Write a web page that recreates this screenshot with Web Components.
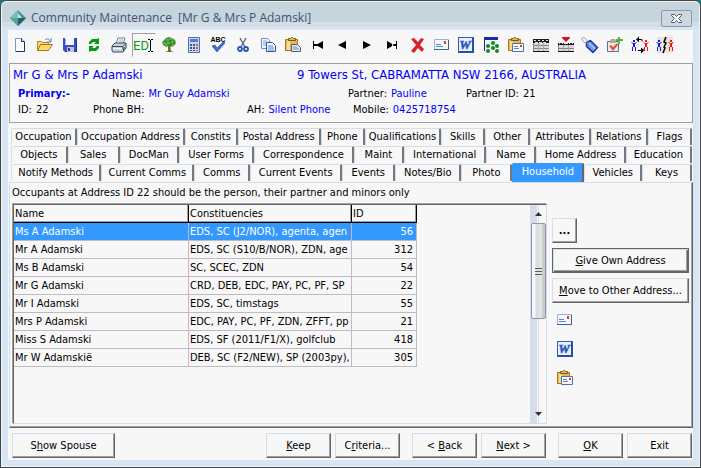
<!DOCTYPE html>
<html lang="en">
<head>
<meta charset="utf-8">
<title>Community Maintenance</title>
<style>
    html, body {
        margin: 0;
        height: 100%;
        background: #107e80;
    }
    body {
        --face: #f7f7f7;
        --frame: #d6e6f5;
        --light: #d4dde8;
        --mid: #a0a0a0;
        --dark: #64646a;
        --select: #3399ff;
        --link: #0000f4;
        font: 11px/14px "DejaVu Sans Condensed", "Noto Sans", sans-serif;
        color: #000;
    }
</style>
</head>
<body>
<maintenance-app></maintenance-app>

<script>
const envelope = `
    <path d="M.5 2.500h14v10H.5z" fill="#f4f8ff" stroke="#9db1d6"/>
    <path d="M0 12.500h14.500V3" fill="none" stroke="#40618f"/>
    <path d="M2 7.500h5M2 9.500h7" stroke="#5c86c4"/>
    <path d="M10 4h2v3h-2z" fill="#d8401c"/>`;

const word = `
    <rect x="0.500" y="0.500" width="15" height="15" fill="#e9f1ff" stroke="#2f5bb8"/>
    <path d="M1 15h14V1" fill="none" stroke="#2450a8" stroke-width="2"/>
    <text x="7" y="12" text-anchor="middle" font-family="Liberation Serif, serif" font-size="13" font-weight="bold" font-style="italic" fill="#2b58b5" stroke="#2b58b5" stroke-width=".5">W</text>`;

const clipboard = `
    <path d="M.5 2.500h12v11H.5z" fill="#e9b950" stroke="#a8761c"/>
    <path d="M2 4h3v9H2z" fill="#f8dc8e"/>
    <path d="M3.500 3.500v-2h2l1-1h1l1 1h2v2z" fill="#d8c070" stroke="#705820"/>`;

const man = (x, c) => `
    <path d="M${x + 1} 3h2v2h-2zM${x + 1} 6h2v4h-2zM${x} 10h1v4h-1zM${x + 3} 10h1v4h-1z" fill="${c}"/>
    <path d="M${x - 0.5} 5l2 2h1l2-2" fill="none" stroke="${c}"/>`;

const icons = {
    blank: `
        <path d="M3.500 1.500h6l3 3v10h-9z" fill="#fafcff" stroke="#7d98bd"/>
        <path d="M12.500 5v9.500H4" fill="none" stroke="#17365e"/>
        <path d="M9.500 1.500v3h3" fill="#c5daf3" stroke="#17365e"/>`,
    open: `
        <path d="M.5 13.500v-9h4l1 1h6v3" fill="#f7d77c" stroke="#b98820"/>
        <path d="M.5 13.500l3-6h12l-4 6z" fill="#ffd869" stroke="#a87919"/>
        <path d="M8 3c2-2 4-1 5 1M14 1v4h-4" fill="none" stroke="#5b7fa8"/>`,
    save: `
        <path d="M1 1h14v14H3l-2-2z" fill="#3c50c0"/>
        <path d="M14.500 2v12.500H3" fill="none" stroke="#26348e"/>
        <path d="M3 1h9v7H3z" fill="#f3f5ff"/>
        <path d="M3 2h1v5H3z" fill="#a3acd8"/>
        <path d="M5 10h7v5H5z" fill="#b9c5e8"/>
        <path d="M6 11h2v3H6z" fill="#28388c"/>`,
    refresh: `
        <path d="M3 7V5l3-3h5l2-1v6H8l2-2H7L5 7z" fill="#0a9a12"/>
        <path d="M13 9v2l-3 3H5l-2 1V9h5l-2 2h3l2-2z" fill="#0a9a12"/>`,
    print: `
        <path d="M5 7l2-6h7l-2 6z" fill="#fff" stroke="#6c7f96"/>
        <path d="M8 3h4M7.500 5h4" stroke="#9aaac0"/>
        <path d="M1 9l3-3h11v5l-3 4H2l-1-1z" fill="#c8d0de" stroke="#3e4c60"/>
        <path d="M1 9.500h11l3-3M12.500 10v4" fill="none" stroke="#3e4c60"/>
        <path d="M2 11h9v1H2z" fill="#fff"/>
        <path d="M11 10h3v2h-3z" fill="#22b52c"/>`,
    edit: `
        <text x="-3" y="13" font-family="Roboto, sans-serif" font-size="13" fill="#0a980f">ED</text>
        <path d="M12 2.500h2M15 2.500h2M14.500 3v11M12 14.500h2M15 14.500h2" stroke="#000"/>`,
    tree: `
        <path d="M7 8h2l1 6 3 1H4l3-1z" fill="#7a6a2c"/>
        <path d="M5 1l3-1 3 1 3 2 1 3-2 3-4 1-1-1-3 1-3-2-1-3 2-2z" fill="#3f9632"/>
        <path d="M2 6h3M5 3h3M9 2h2M10 5h3M6 6h3M4 8h2M11 8h2" stroke="#8bd05f"/>
        <path d="M4 5h1M8 4h2M8 8h2M12 6h1" stroke="#186a20"/>`,
    calc: `
        <path d="M2.500.5h11v15h-11z" fill="#c8d8f4" stroke="#526fae"/>
        <path d="M4 2h8v3H4z" fill="#5c7dca"/>
        <path d="M4 7h2v2H4zM7 7h2v2H7zM4 10h2v2H4zM7 10h2v2H7zM4 13h2v1H4zM7 13h2v1H7z" fill="#3f58a2"/>
        <path d="M10 7h2v2h-2zM10 10h2v2h-2zM10 13h2v1h-2z" fill="#d45555"/>`,
    spell: `
        <text x="8" y="5" text-anchor="middle" font-family="Liberation Sans, sans-serif" font-size="7" font-weight="bold" fill="#000">ABC</text>
        <path d="M2 9l3-1 2 3 6-6 2 1-8 9z" fill="#3d6ed0" stroke="#244a9b" stroke-width=".6"/>`,
    cut: `
        <path d="M5 1l5 9M11 1L6 10" stroke="#5e6d85" stroke-width="1.500"/>
        <circle cx="5" cy="12" r="2" fill="none" stroke="#2355b8" stroke-width="1.800"/>
        <circle cx="11" cy="12" r="2" fill="none" stroke="#2355b8" stroke-width="1.800"/>`,
    copy: `
        <path d="M1.500 1.500h6l2 2v8h-8z" fill="#f2f7ff" stroke="#6b8dbf"/>
        <path d="M3 4h4M3 6h4M3 8h3" stroke="#7ba2dc"/>
        <path d="M6.500 5.500h6l3 3v6h-9z" fill="#f2f7ff" stroke="#31569b"/>
        <path d="M8 9h5M8 11h6M8 13h6" stroke="#5a86ce"/>`,
    paste: `${clipboard}
        <path d="M6.500 7.500h6l3 3v4h-9z" fill="#e3e9f4" stroke="#4a5f82"/>
        <path d="M8 10h4M8 12h6" stroke="#7686a4"/>`,
    first: `<path d="M3 4h1v8H3zM13 4v8L6 8zM4 7h4v2H4z" fill="#000"/>`,
    prev: `<path d="M12 4v8L4 8z" fill="#000"/>`,
    next: `<path d="M4 4v8l8-4z" fill="#000"/>`,
    last: `<path d="M3 4v8l7-4zM12 4h1v8h-1zM8 7h4v2H8z" fill="#000"/>`,
    remove: `<path d="M2 2l3-1 4 4 3-4 3 1-4 6 4 4-2 3-4-4-4 5-3-2 5-6z" fill="#d9222c"/>`,
    mail: envelope,
    word,
    export: `
        <path d="M1.500 14V1.500H14" fill="none" stroke="#17208c"/>
        <path d="M1 0h14v3H1z" fill="#1b2ba8"/>
        <path d="M2 3h13v10H2z" fill="#f5f5f5"/>
        <g fill="#128a20">
            <circle cx="10" cy="6" r="2"/><circle cx="5" cy="9" r="2"/><circle cx="14" cy="9" r="2"/>
            <circle cx="10" cy="11" r="2"/><circle cx="14" cy="14" r="2"/><circle cx="5" cy="14" r="2"/>
        </g>`,
    pasteMail: `${clipboard}
        <path d="M4.500 6.500h11v8h-11z" fill="#f5f9ff" stroke="#53719f"/>
        <path d="M6 9.500h4M6 11.500h5" stroke="#5c86c4"/>
        <path d="M12 8h2v2h-2z" fill="#d8401c"/>`,
    table: `
        <path d="M0 6h16v9H0z" fill="#dcd6dd"/>
        <path d="M0 2h16v4H0z" fill="#1c1c1c"/>
        <path d="M1 3h2v1H1zM5 3h2v1H5zM9 3h2v1H9zM13 3h2v1h-2zM2 5h3v1H2zM6 5h3v1H6zM10 5h3v1h-3z" fill="#e4e4e4"/>
        <path d="M0 8.500h16M0 11.500h16M.5 6v9" stroke="#8a848c"/>
        <path d="M5.500 6v8M10.500 6v8" stroke="#aaa4ac"/>
        <path d="M0 14.500h16" stroke="#111"/>`,
    tableDown: `
        <path d="M4 0h8v1L8 5 4 1z" fill="#d4121e"/>
        <path d="M0 8h16v7H0z" fill="#dcd6dd"/>
        <path d="M0 6h6v2H0zM10 6h6v2h-6zM6 7h4v1H6z" fill="#1c1c1c"/>
        <path d="M1 6h1v1H1zM4 6h1v1H4zM11 6h1v1h-1zM14 6h1v1h-1z" fill="#e4e4e4"/>
        <path d="M0 11.500h16M.5 8v7" stroke="#8a848c"/>
        <path d="M5.500 8v6M10.500 8v6" stroke="#aaa4ac"/>
        <path d="M0 14.500h16" stroke="#111"/>`,
    tag: `
        <path d="M4.500 5.500l4-2 7 7-4.500 5-6.500-6z" fill="#6f92ea" stroke="#1a2ea0" stroke-width="1.400"/>
        <path d="M7 6l6 6" stroke="#a9c2fa" stroke-width="1.500"/>
        <path d="M6 6C2 7-1 2 0 1s4 0 6 4" fill="none" stroke="#8b97a5"/>`,
    task: `
        <path d="M.5 4.500h11v10H.5z" fill="#e7edf8" stroke="#5671a3"/>
        <path d="M3 4l1-2h4l1 2v2H3z" fill="#b8a88a"/>
        <path d="M2 9l2-1 2 2 4-4 1 2-5 6z" fill="#e85a20"/>
        <path d="M11 0h2v2h3v2h-3v3h-2V4H9V2h2z" fill="#4cb848"/>`,
    swap: `${man(0, '#1616e8')}${man(12, '#f01414')}
        <path d="M5 2.500h5v2M6 13.500h5v-2" fill="none" stroke="#000"/>
        <path d="M4 2.500l3-3v6zM12 13.500l-3-3v6z" fill="#000"/>`,
    split: `<path d="M0 0h16v16H0z" fill="#e6e6d8"/>${man(0, '#1616e8')}${man(12, '#f01414')}
        <path d="M9 0L7 5l2 1-2 4 1 1-2 5" fill="none" stroke="#000" stroke-width="1.500"/>`
};

const iconSvg = (name) => `<svg width="16" height="16" viewBox="0 0 16 16" aria-hidden="true">${icons[name]}</svg>`;

class AppWindow extends HTMLElement {
    constructor() {
        super();
        this.attachShadow({ mode: 'open' });
    }

    connectedCallback() {
        this.shadowRoot.innerHTML = `
            <style>
                :host {
                    display: flex;
                    flex-direction: column;
                    box-sizing: border-box;
                    height: 100vh;
                    padding: 0 7px 7px;
                    border: 1px solid #454545;
                    border-radius: 6px 6px 0 0;
                    box-shadow: inset 0 0 0 1px #eef5fa;
                    background: linear-gradient(#c6d5dd 0 21px, #d4dee7 21px 26px, var(--frame) 26px);
                }
                header {
                    display: flex;
                    align-items: center;
                    gap: 5px;
                    height: 29px;
                    padding: 5px 1px 0 2px;
                    box-sizing: border-box;
                    flex: none;
                    color: #45526c;
                }
                h1 {
                    flex: 1;
                    margin: 0;
                    font: 12px/18px "Open Sans", "Noto Sans", sans-serif;
                    white-space: pre;
                }
                button {
                    display: grid;
                    place-items: center;
                    width: 31px;
                    height: 17px;
                    padding: 0;
                    border: 1px solid #8c96b4;
                    border-radius: 2px;
                    background: #ccd8e0;
                }
                main {
                    display: flex;
                    flex-direction: column;
                    flex: 1;
                    min-height: 0;
                    background: var(--face);
                }
            </style>
            <header>
                <svg width="16" height="16" viewBox="0 0 16 16" aria-hidden="true">
                    <path d="M8 0l8 8-8 8-8-8z" fill="#4c9292"/>
                    <path d="M8 0v8H0z" fill="#79bdb8"/>
                    <path d="M8 8h8l-8 8z" fill="#236466"/>
                    <path d="M8 3l4 5H8z" fill="#c2e4de"/>
                    <path d="M8 8v8L0 8z" fill="#57a09c"/>
                </svg>
                <h1>${this.getAttribute('caption')}</h1>
                <button aria-label="Close">
                    <svg width="13" height="11" viewBox="0 0 13 11">
                        <path d="M1.500 1.500h3l2 2 2-2h3v1l-3 3 3 3v1h-3l-2-2-2 2h-3v-1l3-3-3-3z" fill="#fff" stroke="#535666"/>
                    </svg>
                </button>
            </header>
            <main><slot></slot></main>
        `;
    }
}

class ToolButton extends HTMLElement {
    constructor() {
        super();
        this.attachShadow({ mode: 'open' });
    }

    connectedCallback() {
        this.shadowRoot.innerHTML = `
            <style>
                :host { display: block; }
                button {
                    display: grid;
                    place-items: center;
                    width: 24px;
                    height: 24px;
                    padding: 0;
                    border: 1px solid transparent;
                    background: none;
                }
                svg { overflow: visible; }
                :host([pressed]) button {
                    border-color: var(--mid) transparent transparent var(--mid);
                }
            </style>
            <button aria-label="${this.getAttribute('icon')}">${iconSvg(this.getAttribute('icon'))}</button>
        `;
    }
}

class ToolBar extends HTMLElement {
    constructor() {
        super();
        this.attachShadow({ mode: 'open' });
    }

    connectedCallback() {
        this.shadowRoot.innerHTML = `
            <style>
                :host {
                    display: flex;
                    justify-content: space-between;
                    padding: 3px 16px 6px 0;
                }
            </style>
            ${this.getAttribute('icons').split(' ').map(name =>
                `<tool-button icon="${name}" ${name === 'edit' ? 'pressed' : ''}></tool-button>`).join('')}
        `;
    }
}

class InfoField extends HTMLElement {
    constructor() {
        super();
        this.attachShadow({ mode: 'open' });
    }

    connectedCallback() {
        this.shadowRoot.innerHTML = `
            <style>
                :host { display: flex; gap: 4px; white-space: nowrap; }
                .value { color: var(--link); }
                :host([plain]) .value { color: #000; }
            </style>
            <span>${this.getAttribute('label')}:</span>
            <span class="value"><slot></slot></span>
        `;
    }
}

class PersonSummary extends HTMLElement {
    constructor() {
        super();
        this.attachShadow({ mode: 'open' });
    }

    connectedCallback() {
        this.shadowRoot.innerHTML = `
            <style>
                :host {
                    display: block;
                    margin-left: 1px;
                    padding: 2px 3px 4px;
                    border: 1px solid var(--mid);
                    white-space: nowrap;
                }
                .title {
                    display: grid;
                    grid-template-columns: 284px 1fr;
                    font-size: 13px;
                    line-height: 18px;
                    color: var(--link);
                }
                .line {
                    display: grid;
                    grid-template-columns: 75px 154px 106px 113px 1fr;
                    padding-left: 5px;
                    line-height: 16px;
                }
                .title + .line { padding-top: 2px; }
                .name { padding-left: 19px; }
                .partner { grid-column: 4; margin-left: -5px; }
                b { color: var(--link); }
            </style>
            <div class="title"><span>Mr G &amp; Mrs P Adamski</span><span>9 Towers St, CABRAMATTA NSW 2166, AUSTRALIA</span></div>
            <div class="line">
                <b>Primary:-</b>
                <info-field class="name" label="Name">Mr Guy Adamski</info-field>
                <info-field class="partner" label="Partner">Pauline</info-field>
                <info-field plain label="Partner ID">21</info-field>
            </div>
            <div class="line">
                <info-field plain label="ID">22</info-field>
                <info-field label="Phone BH"></info-field>
                <info-field label="AH">Silent Phone</info-field>
                <info-field label="Mobile">0425718754</info-field>
            </div>
        `;
    }
}

// each tab is "label:weight", the weight being its share of the row
class TabRow extends HTMLElement {
    constructor() {
        super();
        this.attachShadow({ mode: 'open' });
    }

    connectedCallback() {
        const active = this.getAttribute('active');
        this.shadowRoot.innerHTML = `
            <style>
                :host { display: flex; height: 18px; }
                button {
                    flex: 1 1 0;
                    min-width: 0;
                    height: 17px;
                    padding: 0;
                    border: solid;
                    border-width: 1px 2px 0 1px;
                    border-color: var(--light) #77777c transparent var(--light);
                    border-radius: 2px 1px 0 0;
                    background: none;
                    font: inherit;
                    color: inherit;
                    white-space: nowrap;
                }
                button[aria-selected=true] {
                    height: 20px;
                    margin-top: -1px;
                    padding-bottom: 3px;
                    border-color: var(--select) var(--dark) var(--select) var(--select);
                    background: var(--select);
                    color: #fff;
                }
            </style>
            ${this.getAttribute('tabs').split('|').map(tab => {
                const [label, weight] = tab.split(':');
                return `<button role="tab" aria-selected="${label === active}" style="flex-grow: ${weight}">${label}</button>`;
            }).join('')}
        `;
    }
}

class PushButton extends HTMLElement {
    constructor() {
        super();
        this.attachShadow({ mode: 'open' });
    }

    connectedCallback() {
        this.shadowRoot.innerHTML = `
            <style>
                :host { display: block; }
                button {
                    width: 100%;
                    height: 25px;
                    padding: 0;
                    border: 1px solid;
                    border-color: var(--light) var(--dark) var(--dark) var(--light);
                    box-shadow: inset -1px -1px var(--mid);
                    background: var(--face);
                    font: inherit;
                    color: inherit;
                    white-space: nowrap;
                }
                :host([default]) button {
                    border-color: var(--dark);
                    box-shadow: inset 1px 1px var(--light), inset -1px -1px var(--dark), inset -2px -2px var(--mid);
                }
            </style>
            <button><slot></slot></button>
        `;
    }
}

class ScrollBar extends HTMLElement {
    constructor() {
        super();
        this.attachShadow({ mode: 'open' });
    }

    connectedCallback() {
        this.shadowRoot.innerHTML = `
            <style>
                :host {
                    display: flex;
                    flex-direction: column;
                    align-items: center;
                    width: 16px;
                    background: linear-gradient(90deg, var(--light) 7px, #f7f7f7 7px 8px, var(--light) 8px 9px, #f7f7f7 9px);
                }
                .arrow { display: grid; place-items: center; height: 18px; }
                .thumb {
                    display: grid;
                    place-items: center;
                    box-sizing: border-box;
                    width: 15px;
                    height: 96px;
                    margin-bottom: auto;
                    border: 1px solid #8d97ac;
                    border-radius: 2px;
                    background: linear-gradient(90deg, #f5f7fa 3px, #d5dfe9 4px 7px, #e4e6da 7px 10px, #ccc9d3 10px);
                }
            </style>
            <div class="arrow"><svg width="7" height="4"><path d="M0 4l3.500-4L7 4z" fill="#333"/></svg></div>
            <div class="thumb"><svg width="7" height="9"><path d="M0 1.500h7M0 4.500h7M0 7.500h7" stroke="#555a66"/></svg></div>
            <div class="arrow"><svg width="7" height="4"><path d="M0 0l3.500 4L7 0z" fill="#333"/></svg></div>
        `;
    }
}

const occupants = [
    ['Ms A Adamski', 'EDS, SC (J2/NOR), agenta, agen', 56],
    ['Mr A Adamski', 'EDS, SC (S10/B/NOR), ZDN, age', 312],
    ['Ms B Adamski', 'SC, SCEC, ZDN', 54],
    ['Mr G Adamski', 'CRD, DEB, EDC, PAY, PC, PF, SP', 22],
    ['Mr I Adamski', 'EDS, SC, timstags', 55],
    ['Mrs P Adamski', 'EDC, PAY, PC, PF, ZDN, ZFFT, pp', 21],
    ['Miss S Adamski', 'EDS, SF (2011/F1/X), golfclub', 418],
    ['Mr W Adamskië', 'DEB, SC (F2/NEW), SP (2003py),', 305]
];

class OccupantGrid extends HTMLElement {
    constructor() {
        super();
        this.attachShadow({ mode: 'open' });
    }

    connectedCallback() {
        this.shadowRoot.innerHTML = `
            <style>
                :host {
                    display: flex;
                    justify-content: space-between;
                    border: 1px solid;
                    border-color: var(--dark) var(--light) var(--light) var(--dark);
                    box-shadow: -1px -1px var(--mid);
                }
                table {
                    align-self: flex-start;
                    width: 403px;
                    table-layout: fixed;
                    border-collapse: separate;
                    border-spacing: 0;
                }
                .name { width: 175px; }
                .id { width: 65px; }
                th, td {
                    box-sizing: border-box;
                    height: 18px;
                    padding: 0 1px;
                    overflow: hidden;
                    border: solid #c3b9c6;
                    border-width: 0 1px 1px 0;
                    font-weight: normal;
                    line-height: 17px;
                    text-align: left;
                    white-space: nowrap;
                }
                th {
                    border-color: #000;
                    box-shadow: inset -1px -1px var(--mid);
                }
                td:last-child { padding-right: 3px; text-align: right; }
                tr.selected td { background: var(--select); color: #fff; }
            </style>
            <table>
                <thead><tr><th class="name">Name</th><th>Constituencies</th><th class="id">ID</th></tr></thead>
                <tbody>
                    ${occupants.map((row, i) => `<tr class="${i === 0 ? 'selected' : ''}">${row.map(cell => `<td>${cell}</td>`).join('')}</tr>`).join('')}
                </tbody>
            </table>
            <scroll-bar></scroll-bar>
        `;
    }
}

class HouseholdPage extends HTMLElement {
    constructor() {
        super();
        this.attachShadow({ mode: 'open' });
    }

    connectedCallback() {
        this.shadowRoot.innerHTML = `
            <style>
                :host {
                    display: flex;
                    flex-direction: column;
                    min-height: 0;
                    margin-left: 1px;
                    border: 1px solid;
                    border-color: var(--light) var(--dark) var(--dark) var(--light);
                    box-shadow: inset -1px -1px var(--mid);
                }
                p { margin: 0; padding: 3px 2px; white-space: nowrap; }
                .body { display: flex; flex: 1; gap: 5px; min-height: 0; padding: 1px 3px 3px; }
                occupant-grid { flex: 1; }
                aside { display: flex; flex-direction: column; width: 137px; gap: 5px; padding-top: 14px; }
                .more { width: 25px; font-weight: bold; }
                .icons { padding: 0 1px; display: grid; gap: 5px; }
            </style>
            <p>Occupants at Address ID 22 should be the person, their partner and minors only</p>
            <div class="body">
                <occupant-grid></occupant-grid>
                <aside>
                    <push-button class="more">...</push-button>
                    <push-button default><u>G</u>ive Own Address</push-button>
                    <push-button><u>M</u>ove to Other Address...</push-button>
                    <div class="icons">
                        <tool-button icon="mail"></tool-button>
                        <tool-button icon="word"></tool-button>
                        <tool-button icon="pasteMail"></tool-button>
                    </div>
                </aside>
            </div>
        `;
    }
}

class MaintenanceApp extends HTMLElement {
    constructor() {
        super();
        this.attachShadow({ mode: 'open' });
    }

    connectedCallback() {
        this.shadowRoot.innerHTML = `
            <style>
                :host { display: block; }
                .tabs { padding: 5px 1px 0 3px; }
                household-page { flex: 1; }
                footer { display: flex; gap: 4px; padding: 5px 1px 2px 4px; }
                footer push-button { width: 65px; }
                footer .spouse { width: 103px; margin-right: auto; }
                footer .group { margin-left: 8px; }
            </style>
            <app-window caption="Community Maintenance  [Mr G &amp;amp; Mrs P Adamski]">
                <tool-bar icons="blank open save refresh print edit tree calc spell cut copy paste first prev next last remove mail word export pasteMail table tableDown tag task swap split"></tool-bar>
                <person-summary></person-summary>
                <div class="tabs" role="tablist">
                    <tab-row tabs="Occupation:66|Occupation Address:110|Constits:52|Postal Address:84|Phone:43|Qualifications:77|Skills:43|Other:44|Attributes:60|Relations:57|Flags:43"></tab-row>
                    <tab-row tabs="Objects:56|Sales:51|DocMan:59|User Forms:75|Correspondence:101|Maint:49|International:83|Name:49|Home Address:90|Education:66"></tab-row>
                    <tab-row active="Household" tabs="Notify Methods:91|Current Comms:94|Comms:55|Current Events:93|Events:52|Notes/Bio:66|Photo:50|Household:72|Vehicles:57|Keys:49"></tab-row>
                </div>
                <household-page></household-page>
                <footer>
                    <push-button class="spouse">S<u>h</u>ow Spouse</push-button>
                    <push-button><u>K</u>eep</push-button>
                    <push-button>C<u>r</u>iteria...</push-button>
                    <push-button class="group">&lt; <u>B</u>ack</push-button>
                    <push-button><u>N</u>ext &gt;</push-button>
                    <push-button class="group"><u>O</u>K</push-button>
                    <push-button>Exit</push-button>
                </footer>
            </app-window>
        `;
    }
}

customElements.define('tool-button', ToolButton);
customElements.define('tool-bar', ToolBar);
customElements.define('info-field', InfoField);
customElements.define('person-summary', PersonSummary);
customElements.define('tab-row', TabRow);
customElements.define('push-button', PushButton);
customElements.define('scroll-bar', ScrollBar);
customElements.define('occupant-grid', OccupantGrid);
customElements.define('household-page', HouseholdPage);
customElements.define('app-window', AppWindow);
customElements.define('maintenance-app', MaintenanceApp);
</script>
</body>
</html>
